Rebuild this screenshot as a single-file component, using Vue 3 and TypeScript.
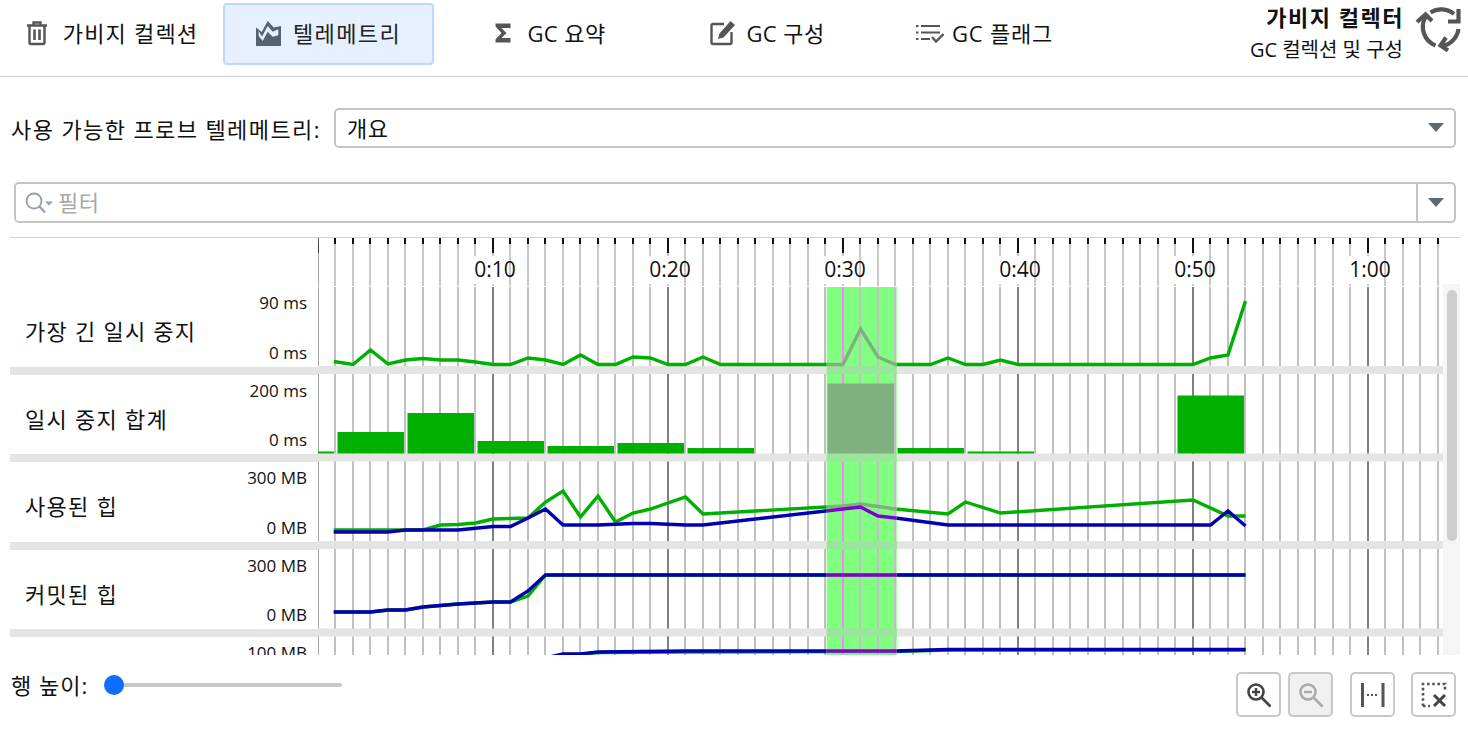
<script setup lang="ts">
type Shape =
  | { k: 'r'; x: number; y: number; w: number; h: number; c: string }
  | { k: 'p'; pts: string; c: string; w: number }

const green = '#00b000'
const blue = '#0000b0'
const lineW = 3.4
const tx = (t: number) => 318 + 17.5 * t

function pts(list: [number, number][]): string {
  return list.map(([t, y]) => `${tx(t)},${y}`).join(' ')
}

const scene: Shape[] = []
const labels: { x: number; text: string }[] = []

// base white
scene.push({ k: 'r', x: 318, y: 238, w: 1125, h: 417, c: '#ffffff' })

for (let t = 0; t <= 64; t++) {
  const x = Math.floor(tx(t))
  const major = t % 10 === 0
  const zero = t === 0
  const w = zero ? 1.4 : 2
  const c = major ? '#808080' : '#c0c0c0'
  scene.push({ k: 'r', x: x - w / 2, y: 244, w, h: 42, c: zero ? '#808080' : '#c8c8c8' })
  scene.push({ k: 'r', x: x - w / 2, y: 238, w, h: major ? 15 : 6, c: '#111111' })
  scene.push({ k: 'r', x: x - w / 2, y: 287, w, h: 368, c })
  if (major && t > 0) {
    labels.push({ x: tx(t) + 2, text: `${Math.floor(t / 60)}:${String(t % 60).padStart(2, '0')}` })
    scene.push({ k: 'r', x: x - 21, y: 256, w: 42, h: 28, c: '#ffffff' })
  }
}

for (const y of [366, 453.5, 541, 628.5]) {
  scene.push({ k: 'r', x: 318, y, w: 1125, h: 8, c: '#e4e4e4' })
}

// row 1
scene.push({
  k: 'p', c: green, w: lineW,
  pts: pts([[0.9, 361.5], [2, 364.5], [3, 350], [4, 364], [5, 360], [6, 358.5], [7, 360], [8, 360], [9, 362], [10, 364.5], [11, 364.5], [12, 358], [13, 360], [14, 364.5], [15, 355], [16, 364.5], [17, 364.5], [18, 357], [19, 358], [20, 364.5], [21, 364.5], [22, 357], [23, 364.5], [30, 364.5], [31, 329], [32, 357], [33, 364.5], [35, 364.5], [36, 358], [37, 364.5], [38, 364.5], [39, 360], [40, 364.5], [50, 364.5], [51, 358], [52, 355], [53, 301]])
})

// row 2 bars
const bars: [number, number, number][] = [
  [318, 334, 451.5], [337.5, 404, 432], [407.5, 474, 413], [477.5, 544, 441], [547.5, 614, 446], [617.5, 684, 443],
  [687.5, 754, 448], [827.5, 894, 383.5], [897.5, 964, 448], [967.5, 1034, 451.5], [1177.5, 1244, 395.5]
]
for (const [a, b, top] of bars) {
  scene.push({ k: 'r', x: a, y: top, w: b - a, h: 453.5 - top, c: green })
}

// row 3
scene.push({
  k: 'p', c: green, w: lineW,
  pts: pts([[0.9, 530], [6, 530], [7, 525], [8, 524.5], [9, 523], [10, 519], [11, 518.5], [12, 518], [13, 502], [14, 491], [15, 517], [16, 496], [17, 522], [18, 513], [19, 509], [21, 497], [22, 514], [30, 506], [31, 504], [33, 509], [36, 514], [37, 502], [39, 513], [50, 500], [52, 516], [53, 516]])
})
scene.push({
  k: 'p', c: blue, w: lineW,
  pts: pts([[0.9, 532], [4, 532], [5, 530], [7, 530], [8, 530], [10, 526.5], [11, 526.5], [12, 518], [13, 509], [14, 525], [16, 525], [18, 523.5], [19, 523.5], [21, 525], [22, 525], [31, 507], [32, 516], [33, 518], [36, 525], [51, 525], [52, 511], [53, 526]])
})

// row 4
scene.push({
  k: 'p', c: green, w: lineW,
  pts: pts([[0.9, 612], [3, 612], [4, 610], [5, 610], [6, 607], [8, 604], [9, 603], [10, 602], [11, 602], [12, 596], [13, 575], [53, 575]])
})
scene.push({
  k: 'p', c: blue, w: lineW,
  pts: pts([[0.9, 612], [3, 612], [4, 610], [5, 610], [6, 607], [8, 604], [9, 603], [10, 602], [11, 602], [12, 591], [13, 575], [53, 575]])
})

// row 5
scene.push({
  k: 'p', c: green, w: lineW,
  pts: pts([[13, 658], [14, 654.5], [15, 654.5], [16, 652.5], [21, 652], [33, 651.5], [36, 650], [53, 650]])
})
scene.push({
  k: 'p', c: blue, w: lineW,
  pts: pts([[13, 658], [14, 654], [15, 654], [16, 652], [21, 651], [33, 651], [36, 649.5], [53, 649.5]])
})

function xor(c: string): string {
  const n = parseInt(c.slice(1), 16) ^ 0x7f007f
  return '#' + n.toString(16).padStart(6, '0')
}

const passes = [
  { id: 'base', clip: undefined as string | undefined, map: (c: string) => c },
  { id: 'sel', clip: 'url(#selection)', map: xor }
]

const rows = [
  { name: '가장 긴 일시 중지', hi: '90 ms', lo: '0 ms' },
  { name: '일시 중지 합계', hi: '200 ms', lo: '0 ms' },
  { name: '사용된 힙', hi: '300 MB', lo: '0 MB' },
  { name: '커밋된 힙', hi: '300 MB', lo: '0 MB' },
  { name: '', hi: '100 MB', lo: '' }
]
</script>

<template>
  <div class="page">
    <header class="top">
      <div class="tab t1">
        <svg class="ic" width="24" height="26" viewBox="0 0 24 26">
          <path d="M2 5.500h20M8.500 5V2.500h7V5M4.500 6v16.500a1.500 1.500 0 0 0 1.500 1.500h12a1.500 1.500 0 0 0 1.500-1.500V6" fill="none" stroke="#555" stroke-width="2.400" />
          <path d="M9.500 9.500v10.500M14.500 9.500v10.500" fill="none" stroke="#555" stroke-width="2.600" />
        </svg>
        <span>가비지 컬렉션</span>
      </div>
      <div class="tab t2 active">
        <svg class="ic" width="25" height="25" viewBox="0 0 25 25">
          <path d="M0 6.500L5.700 11 11.700 0 17.700 6.500 25 5V25H0z" fill="#556270" />
          <path d="M2.700 10L6 15.700 11.700 5 16.700 10.700 22.300 8.300V14.300L16.700 15.700 11.700 10.700 6.700 20 2.700 15z" fill="#e6f0fe" />
        </svg>
        <span>텔레메트리</span>
      </div>
      <div class="tab t3">
        <svg class="ic" width="16" height="20" viewBox="0 0 16 20">
          <path d="M0.500 0.500h15v4.500h-9l5 5-5 5h9v4.500h-15v-3l6-6.500-6-6.500z" fill="#555" />
        </svg>
        <span>GC 요약</span>
      </div>
      <div class="tab t4">
        <svg class="ic" width="26" height="26" viewBox="0 0 26 26">
          <path d="M14 4H3a1.500 1.500 0 0 0-1.500 1.500v17A1.500 1.500 0 0 0 3 24h17a1.500 1.500 0 0 0 1.500-1.500V12" fill="none" stroke="#555" stroke-width="2.400" />
          <path d="M20.500 1l4.500 4-11.500 12.500-5.500 1.500 1.500-5.500z" fill="#555" />
        </svg>
        <span>GC 구성</span>
      </div>
      <div class="tab t5">
        <svg class="ic" width="28" height="20" viewBox="0 0 28 20">
          <path d="M0 3h2.500M0 9.500h2.500M0 16h2.500" stroke="#555" stroke-width="2" />
          <path d="M5 3h19M5 9.500h19M5 16h9" stroke="#555" stroke-width="2" fill="none" />
          <path d="M16 14l4 4.500 7.500-7.500" stroke="#555" stroke-width="2.400" fill="none" />
        </svg>
        <span>GC 플래그</span>
      </div>
      <div class="spacer"></div>
      <div class="title">
        <div class="title-main">가비지 컬렉터</div>
        <div class="title-sub">GC 컬렉션 및 구성</div>
      </div>
      <svg class="refresh" width="56" height="56" viewBox="0 0 56 56">
        <g fill="none" stroke="#555" stroke-width="4.200">
          <path d="M18.500 12.500A20 20 0 0 1 42 14" />
          <path d="M46.500 9V21.500H36" />
          <path d="M13.500 17A20 20 0 0 0 23.500 45.500" />
          <path d="M5 22L13.500 14.500 20 21" />
          <path d="M46.500 29A20 20 0 0 1 30 46" />
          <path d="M34 37.500L28.500 45.500 36 50.500" />
        </g>
      </svg>
    </header>

    <div class="select-row">
      <span class="select-label">사용 가능한 프로브 텔레메트리:</span>
      <div class="select">
        <span class="kr-sm">개요</span>
        <i class="caret"></i>
      </div>
    </div>

    <div class="filter">
      <svg class="search" width="30" height="24" viewBox="0 0 30 24">
        <circle cx="10" cy="10" r="7.500" fill="none" stroke="#98a0a8" stroke-width="1.800" />
        <path d="M15.500 15.500l5.500 6" stroke="#98a0a8" stroke-width="2.200" fill="none" />
        <path d="M21 10.500h8l-4 4z" fill="#98a0a8" />
      </svg>
      <span class="filter-text">필터</span>
      <div class="filter-btn"><i class="caret"></i></div>
    </div>

    <div class="divider"></div>

    <div class="chart">
      <div class="viewport">
        <div class="label-col">
          <div v-for="r in rows" :key="r.hi + r.name" class="row-label">
            <div class="row-name">{{ r.name }}</div>
            <div class="row-scale">
              <span>{{ r.hi }}</span>
              <span>{{ r.lo }}</span>
            </div>
          </div>
        </div>
        <svg class="plot" width="1125" height="417" viewBox="318 238 1125 417">
          <defs>
            <clipPath id="selection"><rect x="826.7" y="287" width="70" height="368" /></clipPath>
          </defs>
          <g v-for="p in passes" :key="p.id" :clip-path="p.clip">
            <template v-for="(s, i) in scene" :key="i">
              <rect v-if="s.k === 'r'" :x="s.x" :y="s.y" :width="s.w" :height="s.h" :fill="p.map(s.c)" />
              <polyline v-else :points="s.pts" fill="none" :stroke="p.map(s.c)" :stroke-width="s.w" />
            </template>
          </g>
          <text v-for="l in labels" :key="l.text" class="tick-label" :x="l.x" y="277" text-anchor="middle">{{ l.text }}</text>
        </svg>
      </div>
      <div class="scrollbar"><div class="thumb"></div></div>
    </div>

    <footer class="foot">
      <span class="foot-label">행 높이:</span>
      <div class="slider"><div class="knob"></div></div>
      <div class="spacer"></div>
      <button class="btn b1">
        <svg width="28" height="28" viewBox="0 0 28 28">
          <circle cx="11" cy="11" r="7.500" fill="none" stroke="#444" stroke-width="2.600" />
          <path d="M7 11h8M11 7v8" stroke="#444" stroke-width="2.400" />
          <path d="M16.500 16.500l9 9" stroke="#444" stroke-width="2.600" />
        </svg>
      </button>
      <button class="btn b2 off">
        <svg width="28" height="28" viewBox="0 0 28 28">
          <circle cx="11" cy="11" r="7.500" fill="none" stroke="#aaa" stroke-width="2.600" />
          <path d="M7 11h8" stroke="#aaa" stroke-width="2.400" />
          <path d="M16.500 16.500l9 9" stroke="#aaa" stroke-width="2.600" />
        </svg>
      </button>
      <button class="btn b3">
        <svg width="28" height="28" viewBox="0 0 28 28">
          <path d="M3.500 2v24M24 2v24" stroke="#555" stroke-width="3" />
          <path d="M8 14h12" stroke="#555" stroke-width="2" stroke-dasharray="2 2" />
        </svg>
      </button>
      <button class="btn b4">
        <svg width="28" height="28" viewBox="0 0 28 28">
          <path d="M3 25V3h22v8" fill="none" stroke="#555" stroke-width="2.600" stroke-dasharray="2.600 2.600" />
          <path d="M3 25h7" fill="none" stroke="#555" stroke-width="2.600" stroke-dasharray="2.600 2.600" />
          <path d="M14 14l11 11M25 14L14 25" stroke="#444" stroke-width="3" />
        </svg>
      </button>
    </footer>
  </div>
</template>

<style scoped>
.page {
  width: 1468px;
  height: 735px;
  overflow: hidden;
  background: #fff;
  color: #111;
  display: flex;
  flex-direction: column;
  font-family: "Open Sans", "Noto Sans CJK KR", sans-serif;
  font-size: 22px;
}
.top {
  height: 76px;
  flex: none;
  display: flex;
  align-items: flex-start;
  border-bottom: 1px solid #d0d0d0;
  box-sizing: content-box;
}
.tab {
  height: 62px;
  width: 211px;
  margin-top: 3px;
  box-sizing: border-box;
  display: flex;
  align-items: center;
  justify-content: center;
  font-size: 22px;
  border: 2px solid transparent;
  border-radius: 4px;
  padding-bottom: 2px;
  white-space: nowrap;
}
.tab span { margin-bottom: 2px; }
.t1 { margin-left: 6px; gap: 14px; letter-spacing: 1.2px; }
.t2 { margin-left: 6px; gap: 12px; letter-spacing: 1.4px; }
.t3 { margin-left: 11px; gap: 16px; letter-spacing: 0.4px; }
.t4 { margin-left: 6px; gap: 10px; letter-spacing: 0.4px; }
.t5 { margin-left: 6px; gap: 8px; letter-spacing: 0.8px; }
.active {
  background: #e6f0fe;
  border-color: #bcdafc;
  color: #222;
}
.spacer { flex: 1; }
.title {
  text-align: right;
  margin-right: 8px;
  white-space: nowrap;
}
.title-main {
  font-weight: 700;
  font-size: 22px;
  letter-spacing: 1.5px;
  line-height: 34px;
}
.title-sub {
  font-size: 20px;
  line-height: 32px;
  margin-right: 1px;
}
.refresh {
  flex: none;
}
.select-row {
  display: flex;
  align-items: center;
  margin-top: 31px;
  padding-left: 11px;
  padding-right: 12px;
  height: 40px;
  flex: none;
}
.select-label {
  width: 323px;
  flex: none;
  white-space: nowrap;
  letter-spacing: 1.4px;
}
.select {
  flex: 1;
  height: 40px;
  box-sizing: border-box;
  border: 2px solid #c4c4c4;
  border-radius: 5px;
  display: flex;
  align-items: center;
  justify-content: space-between;
  padding: 0 10px 2px 11px;
}
.kr-sm { letter-spacing: 0.5px; }
.caret {
  display: block;
  width: 0;
  height: 0;
  border-left: 8px solid transparent;
  border-right: 8px solid transparent;
  border-top: 9px solid #606870;
}
.filter {
  margin: 34px 12px 0 14px;
  height: 41px;
  flex: none;
  box-sizing: border-box;
  border: 2px solid #c4c4c4;
  border-radius: 5px;
  display: flex;
  align-items: center;
  padding-left: 8px;
}
.search { flex: none; }
.filter-text {
  margin-left: 4px;
  color: #a8a8a8;
  flex: 1;
  padding-bottom: 4px;
  letter-spacing: 0.5px;
}
.filter-btn {
  width: 38px;
  height: 100%;
  border-left: 2px solid #c4c4c4;
  display: flex;
  align-items: center;
  justify-content: center;
  box-sizing: border-box;
}
.divider {
  height: 1px;
  background: #d4d4d4;
  margin: 14px 8px 0 10px;
  flex: none;
}
.chart {
  height: 417px;
  flex: none;
  display: flex;
  margin-left: 10px;
  margin-right: 8px;
}
.viewport {
  width: 1433px;
  height: 417px;
  overflow: hidden;
  display: flex;
  flex: none;
}
.label-col {
  width: 308px;
  flex: none;
  padding-top: 49px;
  box-sizing: border-box;
}
.row-label {
  height: 87.5px;
  box-sizing: border-box;
  border-bottom: 8px solid #e4e4e4;
  display: flex;
  justify-content: space-between;
  align-items: center;
}
.row-name {
  padding: 7px 0 0 15px;
  white-space: nowrap;
  letter-spacing: 1.25px;
}
.row-scale {
  height: 100%;
  display: flex;
  flex-direction: column;
  justify-content: space-between;
  align-items: flex-end;
  padding: 5px 11px 3px 0;
  box-sizing: border-box;
  font-size: 17px;
  line-height: 22px;
  white-space: nowrap;
}
.plot {
  flex: none;
  display: block;
}
.tick-label {
  font-size: 21px;
  fill: #111;
}
.scrollbar {
  width: 17px;
  margin-top: 46px;
  background: #f5f5f5;
  padding: 6px 3.500px 0 3.500px;
  box-sizing: border-box;
  flex: none;
}
.thumb {
  height: 251px;
  border-radius: 5px;
  background: #cdcdcd;
}
.foot {
  flex: 1;
  display: flex;
  align-items: flex-start;
  padding: 17px 12px 0 11px;
}
.foot-label {
  line-height: 26px;
  white-space: nowrap;
  letter-spacing: 1px;
}
.slider {
  position: relative;
  width: 238px;
  height: 20px;
  margin: 3px 0 0 16px;
  flex: none;
}
.slider::before {
  content: "";
  position: absolute;
  left: 0;
  right: 0;
  top: 8px;
  height: 4px;
  border-radius: 2px;
  background: #c8c8c8;
}
.knob {
  position: absolute;
  left: 0;
  top: 0;
  width: 20px;
  height: 20px;
  border-radius: 50%;
  background: #0d6efd;
}
.btn {
  width: 45px;
  height: 45px;
  box-sizing: border-box;
  border: 2px solid #c8c8c8;
  border-radius: 5px;
  background: #fff;
  padding: 0;
  display: flex;
  align-items: center;
  justify-content: center;
  flex: none;
}
.b2 { margin-left: 7px; }
.b3 { margin-left: 17px; }
.b4 { margin-left: 16px; }
.off { background: #f0f0f0; }
</style>
